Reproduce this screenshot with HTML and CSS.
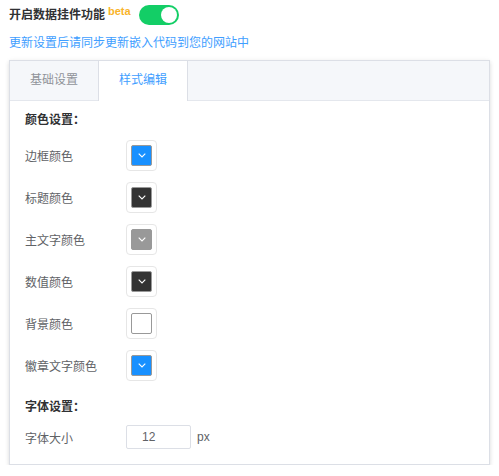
FILE: index.html
```html
<!DOCTYPE html>
<html lang="zh-CN">
<head>
<meta charset="utf-8">
<link rel="stylesheet" href="styles.css">
</head>
<body>
<div class="page">
  <div class="top">
    <span class="title">开启数据挂件功能</span>
    <span class="beta">beta</span>
    <span class="switch"><span class="knob"></span></span>
  </div>
  <div class="hint">更新设置后请同步更新嵌入代码到您的网站中</div>
  <div class="card">
    <div class="tabs">
      <div class="tab">基础设置</div>
      <div class="tab active">样式编辑</div>
    </div>
    <div class="content">
      <div class="heading">颜色设置：</div>
      <div class="rows">
        <div class="row"><span class="label">边框颜色</span><span class="picker"><span class="swatch blue"><svg viewBox="0 0 8 5" width="8" height="5"><polyline points="0.7,0.7 4,4 7.3,0.7" fill="none" stroke="#fff" stroke-width="1.1"/></svg></span></span></div>
        <div class="row"><span class="label">标题颜色</span><span class="picker"><span class="swatch dark"><svg viewBox="0 0 8 5" width="8" height="5"><polyline points="0.7,0.7 4,4 7.3,0.7" fill="none" stroke="#fff" stroke-width="1.1"/></svg></span></span></div>
        <div class="row"><span class="label">主文字颜色</span><span class="picker"><span class="swatch gray"><svg viewBox="0 0 8 5" width="8" height="5"><polyline points="0.7,0.7 4,4 7.3,0.7" fill="none" stroke="#fff" stroke-width="1.1"/></svg></span></span></div>
        <div class="row"><span class="label">数值颜色</span><span class="picker"><span class="swatch dark"><svg viewBox="0 0 8 5" width="8" height="5"><polyline points="0.7,0.7 4,4 7.3,0.7" fill="none" stroke="#fff" stroke-width="1.1"/></svg></span></span></div>
        <div class="row"><span class="label">背景颜色</span><span class="picker"><span class="swatch white"></span></span></div>
        <div class="row"><span class="label">徽章文字颜色</span><span class="picker"><span class="swatch blue"><svg viewBox="0 0 8 5" width="8" height="5"><polyline points="0.7,0.7 4,4 7.3,0.7" fill="none" stroke="#fff" stroke-width="1.1"/></svg></span></span></div>
      </div>
      <div class="heading heading2">字体设置：</div>
      <div class="row size-row"><span class="label">字体大小</span><span class="input">12</span><span class="unit">px</span></div>
    </div>
  </div>
</div>
</body>
</html>
```

FILE: styles.css
```css
* { box-sizing: border-box; }
body {
  margin: 0;
  background: #fff;
  font-family: "Liberation Sans", "Noto Sans CJK SC", sans-serif;
  font-size: 12px;
  color: #606266;
}
.page {
  padding: 5px 9px 0 9px;
  width: 499px;
}
.top {
  display: flex;
  align-items: center;
  height: 20px;
}
.title {
  font-weight: bold;
  color: #303133;
  font-size: 12px;
  line-height: 20px;
}
.beta {
  color: #f9b42a;
  font-weight: bold;
  font-size: 11px;
  line-height: 12px;
  margin-left: 3px;
  align-self: flex-start;
}
.switch {
  margin-left: 8px;
  width: 40px;
  height: 20px;
  border-radius: 10px;
  background: #13ce66;
  position: relative;
  display: inline-block;
}
.knob {
  position: absolute;
  top: 2px;
  right: 2px;
  width: 16px;
  height: 16px;
  border-radius: 50%;
  background: #fff;
}
.hint {
  margin-top: 8px;
  line-height: 20px;
  color: #409eff;
}
.card {
  margin-top: 7px;
  width: 481px;
  border: 1px solid #dcdfe6;
  box-shadow: 0 2px 4px 0 rgba(0,0,0,.12), 0 0 6px 0 rgba(0,0,0,.04);
  background: #fff;
}
.tabs {
  display: flex;
  height: 40px;
  background: #f5f7fa;
  border-bottom: 1px solid #e4e7ed;
}
.tab {
  height: 40px;
  line-height: 39px;
  padding: 0 20px;
  color: #909399;
  font-size: 12px;
  border-left: 1px solid transparent;
  border-right: 1px solid transparent;
}
.tab:first-child { border-left: 0; }
.tab.active {
  color: #409eff;
  background: #fff;
  border-left-color: #dcdfe6;
  border-right-color: #dcdfe6;
  margin-left: -1px;
}
.content {
  padding: 11px 15px 15px 15px;
}
.heading {
  font-weight: bold;
  color: #303133;
  line-height: 16px;
  margin-bottom: 11px;
}
.heading2 {
  margin-top: 18px;
  margin-bottom: 10px;
}
.rows {
  display: flex;
  flex-direction: column;
  gap: 10px;
}
.row {
  display: flex;
  align-items: center;
  height: 32px;
}
.label {
  width: 101px;
  flex: none;
  color: #606266;
}
.picker {
  width: 31px;
  height: 31px;
  padding: 4px;
  border: 1px solid #e6e6e6;
  border-radius: 4px;
  display: inline-block;
}
.swatch {
  display: flex;
  align-items: center;
  justify-content: center;
  width: 100%;
  height: 100%;
  border: 1px solid #999;
  border-radius: 2px;
}
.swatch.blue { background: #1890ff; }
.swatch.dark { background: #333; }
.swatch.gray { background: #999; }
.swatch.white { background: #fff; }
.size-row { height: 24px; }
.input {
  width: 65px;
  height: 24px;
  border: 1px solid #dcdfe6;
  border-radius: 2px;
  padding: 0 15px;
  line-height: 22px;
  color: #606266;
}
.unit {
  margin-left: 6px;
  color: #606266;
}
```
